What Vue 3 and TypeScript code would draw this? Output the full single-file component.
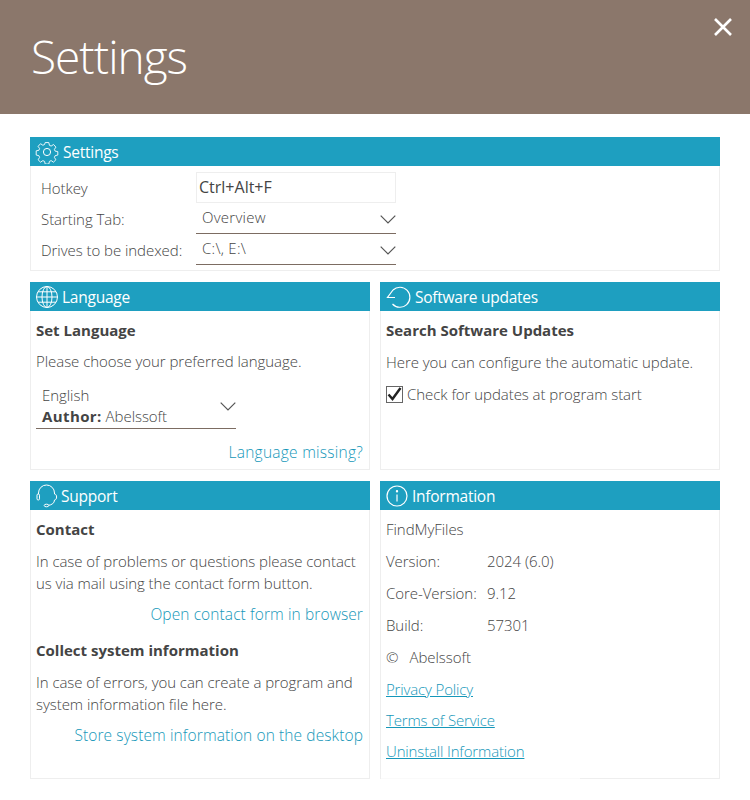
<script setup lang="ts">
const rows = [
  { label: 'Version:', value: '2024 (6.0)' },
  { label: 'Core-Version:', value: '9.12' },
  { label: 'Build:', value: '57301' },
]
</script>

<template>
  <div class="page">
    <header class="top">
      <h1>Settings</h1>
      <svg class="close" width="20" height="20" viewBox="0 0 20 20"><path d="M2 2 L18 18 M18 2 L2 18" stroke="#fff" stroke-width="2.6" fill="none" /></svg>
    </header>
    <main class="content">
      <section class="card">
        <div class="bar">
          <svg class="ico gear" width="24" height="24" viewBox="0 0 24 24" fill="none" stroke="#fff" stroke-width="1">
            <circle cx="12" cy="12" r="3.6" />
            <path d="M10 1.5h4l.7 3.1 1.9.8 2.7-1.7 2.6 2.9-1.7 2.5.8 1.9 3 .6v3.8l-3 .7-.8 1.9 1.7 2.6-2.7 2.7-2.6-1.7-1.9.8-.7 3h-4l-.7-3-1.9-.8-2.6 1.7-2.7-2.7 1.7-2.6-.8-1.9-3-.7V10.700l3-.6.8-1.900-1.700-2.500 2.700-2.900 2.600 1.700 1.900-.8z" transform="translate(1.200 1.200) scale(.9)" stroke-linejoin="round" />
          </svg>
          <span>Settings</span>
        </div>
        <div class="form">
          <div class="form-row hot">
            <span class="lab">Hotkey</span>
            <div class="hotkey">Ctrl+Alt+F</div>
          </div>
          <div class="form-row sel">
            <span class="lab">Starting Tab:</span>
            <div class="select"><span>Overview</span><svg class="chev" width="16" height="9" viewBox="0 0 16 9"><path d="M.7.7 8 8 15.300.7" fill="none" stroke="#555" stroke-width="1.200" /></svg></div>
          </div>
          <div class="form-row sel">
            <span class="lab">Drives to be indexed:</span>
            <div class="select"><span>C:\, E:\</span><svg class="chev" width="16" height="9" viewBox="0 0 16 9"><path d="M.7.7 8 8 15.300.7" fill="none" stroke="#555" stroke-width="1.200" /></svg></div>
          </div>
        </div>
      </section>

      <div class="grid two-a">
        <section class="card">
          <div class="bar">
            <svg class="ico" width="24" height="24" viewBox="0 0 24 24" fill="none" stroke="#fff" stroke-width="1">
              <circle cx="12" cy="12" r="10.500" />
              <ellipse cx="12" cy="12" rx="5" ry="10.500" />
              <path d="M12 1.500v21M1.500 12h21M3 6.800h18M3 17.200h18" />
            </svg>
            <span>Language</span>
          </div>
          <div class="body">
            <h3>Set Language</h3>
            <p class="p1">Please choose your preferred language.</p>
            <div class="lang">
              <div class="lang-text">
                <div>English</div>
                <div><b>Author:</b> Abelssoft</div>
              </div>
              <svg class="chev" width="16" height="9" viewBox="0 0 16 9"><path d="M.7.7 8 8 15.300.7" fill="none" stroke="#555" stroke-width="1.200" /></svg>
            </div>
            <a class="link miss">Language missing?</a>
          </div>
        </section>
        <section class="card">
          <div class="bar">
            <svg class="ico up" width="26" height="24" viewBox="0 0 26 24" fill="none" stroke="#fff" stroke-width="1.200">
              <path d="M8 5A10 10 0 1 1 7.500 19" />
              <path d="M8 5 2.500 12.500H10" />
            </svg>
            <span>Software updates</span>
          </div>
          <div class="body">
            <h3>Search Software Updates</h3>
            <p class="p1 rp">Here you can configure the automatic update.</p>
            <label class="check">
              <span class="box"><svg width="15" height="14" viewBox="0 0 15 14"><path d="M1.500 7.500 5.500 12 13.500 1" fill="none" stroke="#222" stroke-width="2.400" /></svg></span>
              <span>Check for updates at program start</span>
            </label>
          </div>
        </section>
      </div>

      <div class="grid two-b">
        <section class="card">
          <div class="bar">
            <svg class="ico sup" width="24" height="24" viewBox="0 0 24 24" fill="none" stroke="#fff" stroke-width="1">
              <path d="M3.500 10V9a8 8 0 0 1 16 0v1" />
              <rect x="2" y="10" width="2.500" height="6" rx="1.200" />
              <path d="M19.500 10c2.800 0 2.800 6 0 6" />
              <path d="M19.500 16c0 3.200-3 5-6 5.300" />
              <ellipse cx="11.500" cy="21.500" rx="2.300" ry="1.300" />
            </svg>
            <span>Support</span>
          </div>
          <div class="body">
            <h3>Contact</h3>
            <p class="p1 two">In case of problems or questions please contact<br />us via mail using the contact form button.</p>
            <a class="link open">Open contact form in browser</a>
            <h3 class="h2">Collect system information</h3>
            <p class="p1 two">In case of errors, you can create a program and<br />system information file here.</p>
            <a class="link open">Store system information on the desktop</a>
          </div>
        </section>
        <section class="card info">
          <div class="bar">
            <svg class="ico" width="24" height="24" viewBox="0 0 24 24" fill="none" stroke="#fff" stroke-width="1.200">
              <circle cx="12" cy="12" r="10" />
              <path d="M12 10.500v7" />
              <circle cx="12" cy="7.200" r=".6" fill="#fff" />
            </svg>
            <span>Information</span>
          </div>
          <div class="body list">
            <div class="li">FindMyFiles</div>
            <div v-for="r in rows" :key="r.label" class="li kv"><span>{{ r.label }}</span><span>{{ r.value }}</span></div>
            <div class="li copy"><span>©</span><span>Abelssoft</span></div>
            <a class="li ul">Privacy Policy</a>
            <a class="li ul">Terms of Service</a>
            <a class="li ul">Uninstall Information</a>
          </div>
          <div class="fade"></div>
        </section>
      </div>
    </main>
  </div>
</template>

<style scoped>
.page {
  width: 750px;
  height: 800px;
  overflow: hidden;
  background: #fff;
  font-family: "Open Sans", "Noto Sans", sans-serif;
  font-weight: 300;
  font-size: 15px;
  color: #444;
  letter-spacing: -.05px;
}
.top {
  height: 114px;
  background: #8b776b;
  position: relative;
  display: flex;
  align-items: center;
}
h1 {
  margin: 0 0 3px 31px;
  font-weight: 300;
  font-size: 46px;
  line-height: 60px;
  color: #fff;
  letter-spacing: -1px;
}
.close { position: absolute; right: 17px; top: 17px; }
.content { padding: 23px 30px 0; display: flex; flex-direction: column; gap: 11px; }
.card {
  border: 1px solid #eee;
  box-sizing: border-box;
  position: relative;
}
.bar {
  height: 29px;
  margin: -1px -1px 0;
  background: #1e9fc0;
  color: #fff;
  display: flex;
  align-items: center;
  gap: 3px;
  padding-left: 5px;
  font-size: 15.500px;
  font-weight: 400;
  letter-spacing: -.25px;
}
.ico { flex: none; }
.gear { margin-right: 1px; }
.up { margin-right: 1px; }
.sup { margin-right: -1px; }
.form { height: 104px; padding: 6px 0 0 10px; box-sizing: border-box; }
.form-row { display: flex; align-items: center; }
.lab { width: 155px; flex: none; }
.hot { height: 31px; }
.hotkey {
  width: 200px; height: 31px; box-sizing: border-box;
  border: 1px solid #eee;
  padding-left: 2px;
  line-height: 29px;
  font-size: 16px;
  font-weight: 400;
  letter-spacing: 0;
  color: #444;
}
.sel { height: 31px; }
.select {
  width: 200px; height: 31px; box-sizing: border-box;
  border-bottom: 1px solid #7c6c62;
  display: flex; justify-content: space-between;
  padding: 0 0 0 6px;
  font-size: 15px;
  line-height: 29px;
  letter-spacing: .25px;
}
.select .chev { margin-top: 12px; }
.grid { display: grid; grid-template-columns: 340px 340px; gap: 10px; }
.two-a { height: 188px; }
.two-b { height: 298px; }
.body { padding: 8px 6px 0 5px; display: flex; flex-direction: column; }
h3 { margin: 0; font-size: 15px; font-weight: 700; line-height: 22px; color: #444; letter-spacing: 0; }
.p1 { margin: 9px 0 0; line-height: 22px; }
.rp { margin-top: 10px; }
.two { margin-top: 10px; }
.lang {
  width: 200px;
  height: 47px;
  box-sizing: border-box;
  margin-top: 10px;
  border-bottom: 1px solid #7c6c62;
  padding: 3px 0 0 6px;
  display: flex;
  justify-content: space-between;
  line-height: 21px;
}
.lang b { font-weight: 700; letter-spacing: .4px; }
.lang .chev { margin: 17px 0 0; }
.link { color: #1597b9; align-self: flex-end; font-size: 15.500px; letter-spacing: .1px; }
.miss { margin-top: 12px; letter-spacing: .25px; }
.open { margin-top: 9px; line-height: 22px; }
.h2 { margin-top: 14px; }
.check { display: flex; align-items: center; gap: 4px; margin-top: 10px; line-height: 22px; }
.box {
  width: 15px; height: 15px; border: 1px solid #666; flex: none;
  display: flex; align-items: center; justify-content: center;
}
.list { padding-top: 8px; gap: 10px; }
.li { line-height: 22px; height: 22px; }
.kv { display: flex; }
.kv span:first-child { width: 101px; }
.copy { display: flex; gap: 11px; margin-bottom: 1px; }
.ul { color: #1597b9; text-decoration: underline; align-self: flex-start; height: 21px; line-height: 21px; letter-spacing: -.15px; }
.fade {
  position: absolute; left: 0; bottom: -1px; width: 199px; height: 1px; background: #fafafa;
}
</style>
